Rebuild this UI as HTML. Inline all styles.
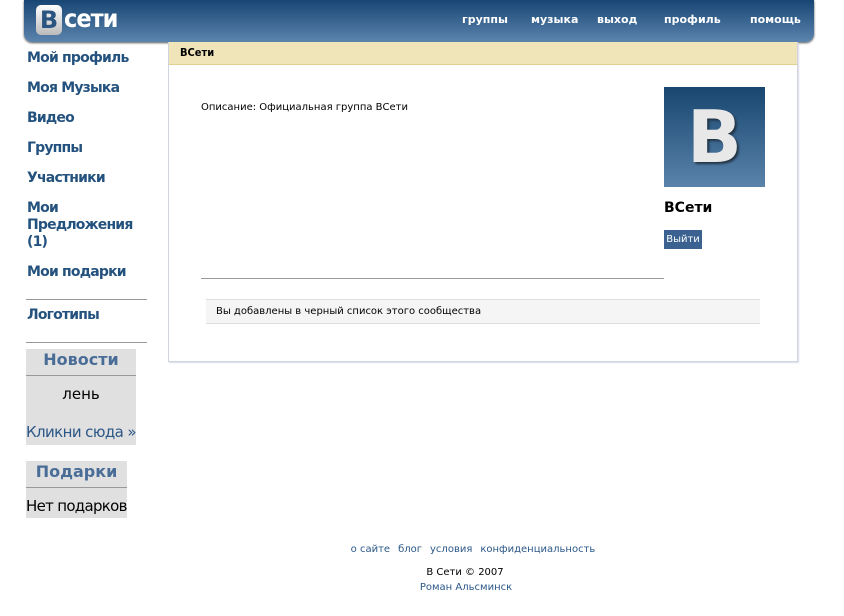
<!DOCTYPE html>
<html><head><meta charset="utf-8"><style>
*{margin:0;padding:0;box-sizing:border-box}
body{width:844px;height:616px;background:#fff;font-family:"DejaVu Sans","Liberation Sans",sans-serif;position:relative;overflow:hidden}
.a{position:absolute}
#hdr{left:24px;top:0;width:790px;height:42px;border-radius:0 0 8px 8px;background:linear-gradient(#184674,#5b84ad);box-shadow:0 1px 2px #555}
.nav{top:13px;color:#fff;font-size:11px;font-weight:bold}
.lm{left:27px;font-size:14px;font-weight:bold;color:#24527e;line-height:17px;letter-spacing:-0.8px}
.box{background:#e0e0e0;left:26px}
.f span{margin:0 4px}
</style></head><body>
<div id="hdr" class="a">
 <div class="a" style="left:12px;top:5px;width:26px;height:30px;border-radius:5px;background:linear-gradient(#fff,#bbb);color:#2a5580;font:bold 24px/30px 'DejaVu Sans',sans-serif;text-align:center">B</div>
 <div class="a" style="left:40px;top:2px;color:#fff;font:bold 25px/34px 'DejaVu Sans Condensed','DejaVu Sans',sans-serif;letter-spacing:-1px">сети</div>
 <div class="a nav" style="left:438px">группы</div>
 <div class="a nav" style="left:507px">музыка</div>
 <div class="a nav" style="left:573px">выход</div>
 <div class="a nav" style="left:640px">профиль</div>
 <div class="a nav" style="left:726px">помощь</div>
</div>
<div class="a lm" style="top:50px">Мой профиль</div>
<div class="a lm" style="top:80px">Моя Музыка</div>
<div class="a lm" style="top:110px">Видео</div>
<div class="a lm" style="top:140px">Группы</div>
<div class="a lm" style="top:170px">Участники</div>
<div class="a lm" style="top:200px">Мои<br>Предложения<br>(1)</div>
<div class="a lm" style="top:264px">Мои подарки</div>
<div class="a" style="left:26px;top:299px;width:121px;height:1px;background:#999"></div>
<div class="a lm" style="top:307px">Логотипы</div>
<div class="a" style="left:26px;top:342px;width:121px;height:1px;background:#999"></div>
<div class="a box" style="top:349px;width:110px;height:96px">
 <div style="height:27px;border-bottom:1px solid #999;text-align:center;font:bold 16px/22px 'DejaVu Sans',sans-serif;color:#4a6d98">Новости</div>
 <div style="text-align:center;font-size:15px;line-height:18px;margin-top:9px">лень</div>
 <div style="font-size:15px;letter-spacing:-0.6px;color:#2b5788;margin-top:20px;white-space:nowrap">Кликни сюда »</div>
</div>
<div class="a box" style="top:461px;width:101px;height:57px">
 <div style="height:27px;border-bottom:1px solid #999;text-align:center;font:bold 16px/22px 'DejaVu Sans',sans-serif;color:#4a6d98">Подарки</div>
 <div style="font-size:15px;letter-spacing:-0.7px;margin-top:9px;white-space:nowrap">Нет подарков</div>
</div>
<div class="a" style="left:168px;top:42px;width:630px;height:320px;border:1px solid #d0d4dc;border-top:none;box-shadow:1px 1px 1px #dde">
 <div style="height:23px;background:#efe5b8;border-bottom:1px solid #e0d090;font:bold 11px/22px 'DejaVu Sans Condensed',sans-serif;padding-left:11px">ВСети</div>
 <div class="a" style="left:32px;top:60px;font-size:10px">Описание: Официальная группа ВСети</div>
 <div class="a" style="left:495px;top:45px;width:101px;height:100px;background:linear-gradient(#17466f,#5a83ab);color:#e8e8e8;font:bold 72px/100px 'DejaVu Sans',sans-serif;text-align:center;text-shadow:2px 2px 2px #234">B</div>
 <div class="a" style="left:495px;top:158px;font:bold 14px 'DejaVu Sans',sans-serif">ВСети</div>
 <div class="a" style="left:495px;top:188px;width:38px;height:19px;background:#3a6190;color:#fff;font-size:10px;line-height:19px;text-align:center">Выйти</div>
 <div class="a" style="left:32px;top:236px;width:463px;height:1px;background:#999"></div>
 <div class="a" style="left:37px;top:257px;width:554px;height:25px;background:#f5f5f5;border-top:1px solid #ddd;border-bottom:1px solid #ddd;font-size:10px;line-height:24px;padding-left:10px">Вы добавлены в черный список этого сообщества</div>
</div>
<div class="a f" style="left:0;width:946px;top:544px;text-align:center;font-size:10px;color:#2b5788"><span>о сайте</span><span>блог</span><span>условия</span><span>конфиденциальность</span></div>
<div class="a" style="left:0;width:930px;top:567px;text-align:center;font-size:10px">В Сети © 2007</div>
<div class="a" style="left:0;width:932px;top:582px;text-align:center;font-size:10px;color:#2b5788">Роман Альсминск</div>
</body></html>
